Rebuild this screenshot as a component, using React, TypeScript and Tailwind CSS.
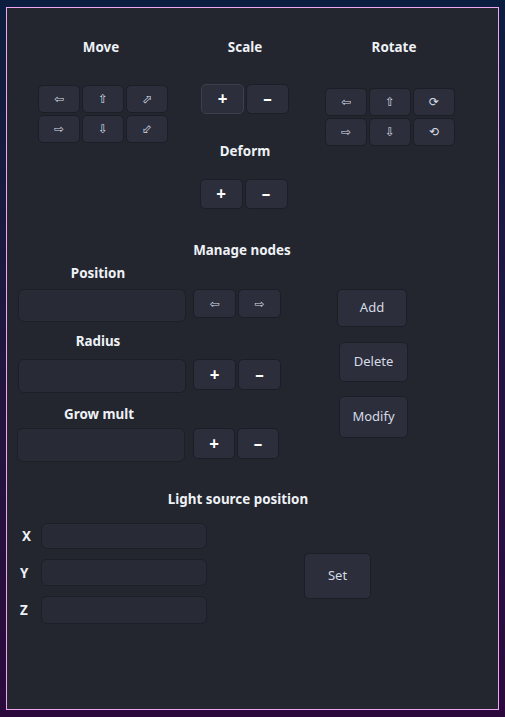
import type { ReactNode } from 'react'

const btn =
  'flex items-center justify-center rounded-[5px] border border-[#1c1e26] bg-[#2c2f3b] text-[#d6dbe6]'
const arrow = "font-['DejaVu_Sans',sans-serif] text-[12px]"
const sign = "font-['Noto_Sans',sans-serif] text-[17px] font-bold text-white"
const input = 'rounded-[6px] border border-[#1d1f27] bg-[#282b36]'
const head = "font-['Noto_Sans',sans-serif] text-[13.4px] font-bold leading-[20px] text-[#eef1f6]"

function Btn({ className, children }: { className: string; children: ReactNode }) {
  return <div className={`${btn} ${className}`}>{children}</div>
}

function ArrowGrid({ items }: { items: string[] }) {
  return (
    <div className="grid grid-cols-[42px_42px_42px] gap-[2px]">
      {items.map((a, i) => (
        <Btn key={i} className={`h-[28px] ${arrow}`}>
          {a}
        </Btn>
      ))}
    </div>
  )
}

function PlusMinus({ w = 'w-[43px]', h = 'h-[30px]', focus = false }: { w?: string; h?: string; focus?: boolean }) {
  return (
    <div className="flex gap-[2px]">
      <Btn className={`${w} ${h} ${sign} ${focus ? 'border-[#3d404b]' : ''}`}>+</Btn>
      <Btn className={`${w} ${h} ${sign}`}>–</Btn>
    </div>
  )
}

export default function App() {
  return (
    <div className="min-h-[717px] bg-gradient-to-b from-[#0b1e3f] to-[#2c093d] pt-[7px] pl-[6px]">
      <div className="h-[703px] w-[493px] border border-[#f2a6f2] bg-[#23262e] font-['Noto_Sans',sans-serif]">
        {/* transform controls */}
        <div className="flex items-start pt-[29px]">
          <div className="ml-[31px] flex w-[130px] flex-col items-center">
            <div className={`${head} pr-[4px]`}>Move</div>
            <div className="mt-[28px]">
              <ArrowGrid items={['⇦', '⇧', '⬀', '⇨', '⇩', '⬃']} />
            </div>
          </div>
          <div className="ml-[33px] flex w-[88px] flex-col items-center">
            <div className={head}>Scale</div>
            <div className="mt-[27px]">
              <PlusMinus focus />
            </div>
            <div className={`${head} mt-[27px]`}>Deform</div>
            <div className="mt-[18px] pr-[3px]">
              <PlusMinus />
            </div>
          </div>
          <div className="ml-[36px] flex w-[130px] flex-col items-center">
            <div className={`${head} pl-[8px]`}>Rotate</div>
            <div className="mt-[31px]">
              <ArrowGrid items={['⇦', '⇧', '⟳', '⇨', '⇩', '⟲']} />
            </div>
          </div>
        </div>

        {/* nodes */}
        <div className={`${head} mt-[31px] w-[470px] text-center`}>Manage nodes</div>
        <div className="flex items-start">
          <div className="ml-[11px] flex flex-col">
            <div className={`${head} mt-[3px] w-[160px] text-center`}>Position</div>
            <div className="mt-[6px] flex items-start gap-[7px]">
              <div className={`${input} h-[33px] w-[168px]`} />
              <div className="flex gap-[2px]">
                <Btn className={`h-[29px] w-[43px] ${arrow}`}>⇦</Btn>
                <Btn className={`h-[29px] w-[43px] ${arrow}`}>⇨</Btn>
              </div>
            </div>
            <div className={`${head} mt-[9px] w-[160px] text-center`}>Radius</div>
            <div className="mt-[8px] flex items-start gap-[7px]">
              <div className={`${input} h-[34px] w-[168px]`} />
              <PlusMinus w="w-[43px]" h="h-[31px]" />
            </div>
            <div className={`${head} mt-[11px] w-[162px] text-center`}>Grow mult</div>
            <div className="mt-[4px] -ml-[1px] flex items-start gap-[8px]">
              <div className={`${input} h-[34px] w-[168px]`} />
              <PlusMinus w="w-[42px]" h="h-[31px]" />
            </div>
          </div>
          <div className="ml-[55px] mt-[29px] flex flex-col items-center text-[13px]">
            <Btn className="h-[38px] w-[70px]">Add</Btn>
            <Btn className="mt-[15px] ml-[3px] h-[40px] w-[69px]">Delete</Btn>
            <Btn className="mt-[14px] ml-[3px] h-[42px] w-[69px]">Modify</Btn>
          </div>
        </div>

        {/* light */}
        <div className={`${head} mt-[27px] w-[462px] text-center`}>Light source position</div>
        <div className="mt-[14px] flex items-center">
          <div className="ml-[13px] flex flex-col gap-[10px]">
            {[
              ['X', 'h-[26px]', 'pl-[2px]'],
              ['Y', 'h-[27px]', 'pl-0'],
              ['Z', 'h-[28px]', 'pl-0'],
            ].map(([l, h, p]) => (
              <div key={l} className="flex items-center">
                <div className={`${head} ${p} w-[21px]`}>{l}</div>
                <div className={`${input} ${h} w-[166px]`} />
              </div>
            ))}
          </div>
          <Btn className="ml-[97px] mt-[4px] h-[46px] w-[67px] text-[13px]">Set</Btn>
        </div>
      </div>
    </div>
  )
}
